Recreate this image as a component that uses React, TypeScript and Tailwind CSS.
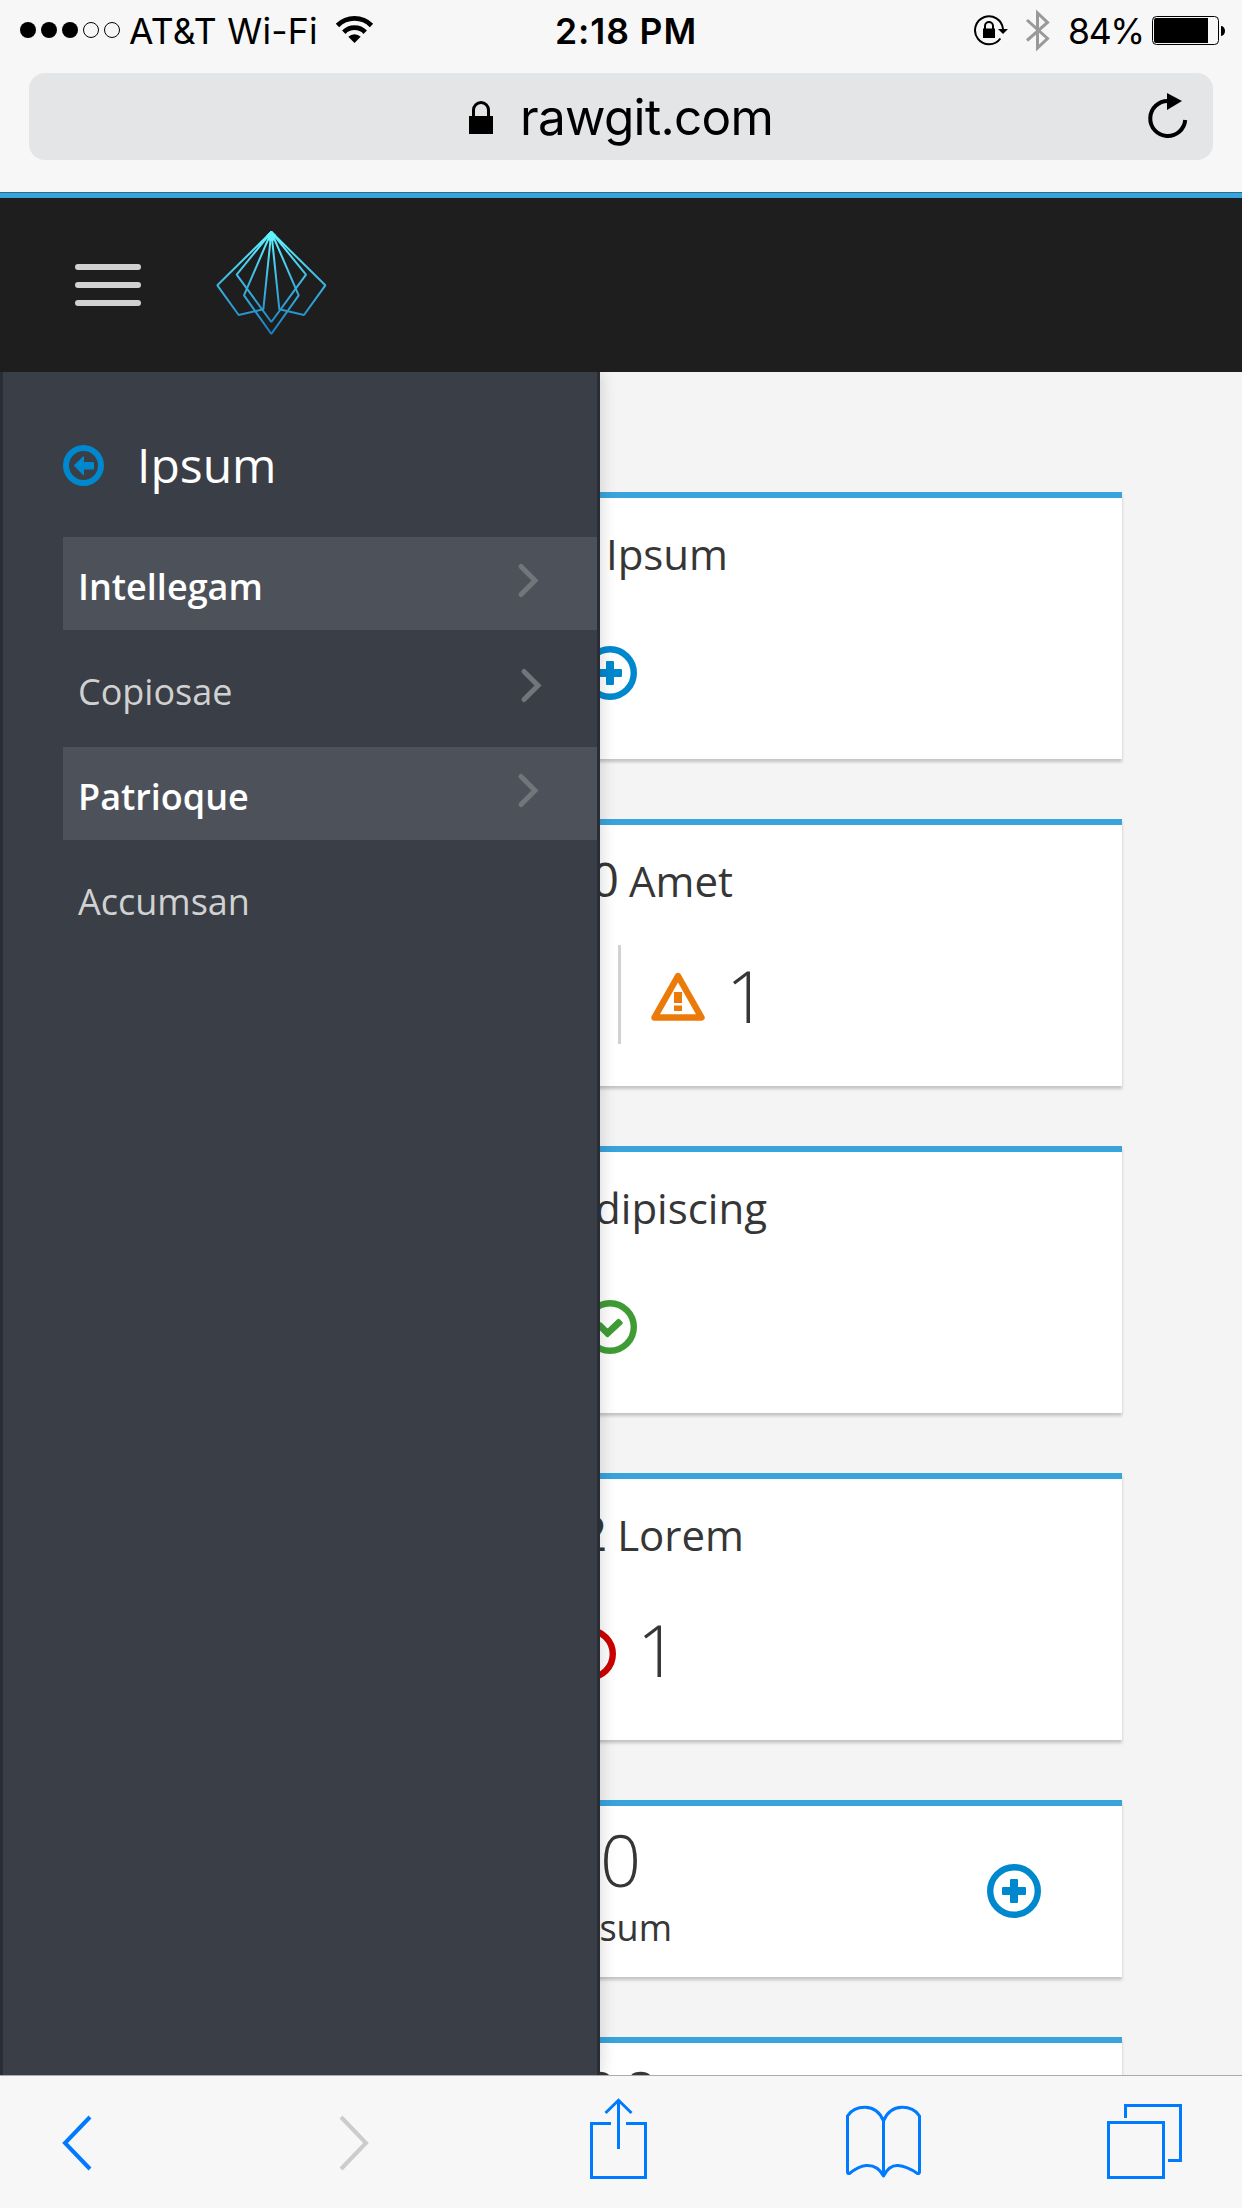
import type { ReactNode } from 'react';

function StatusBar() {
  return (
    <div className="flex h-[73px] items-start font-['Inter',sans-serif] text-black">
      <svg className="ml-5 mt-[21px] shrink-0" width="101" height="18" viewBox="20 21 101 18">
        {[28, 49, 70].map((x) => (
          <circle key={x} cx={x} cy="30" r="8" />
        ))}
        {[91, 112].map((x) => (
          <circle key={x} cx={x} cy="30" r="7.5" fill="none" stroke="#000" strokeWidth="1" />
        ))}
      </svg>
      <div className="ml-[8px] mt-[8px] w-[207px] whitespace-nowrap text-[35.5px] leading-[48px] tracking-[0.25px]">AT&amp;T Wi-Fi</div>
      <svg className="mt-[15px] shrink-0" width="38" height="29" viewBox="336 15 38 29" fill="none" stroke="#000" strokeWidth="4.8">
        <path d="M337.5 25.5a24 24 0 0 1 34 0" />
        <path d="M343.8 32.2a15 15 0 0 1 21.4 0" />
        <path d="M354.5 43l-6.2-6.2a8.6 8.6 0 0 1 12.4 0z" fill="#000" stroke="none" />
      </svg>
      <div className="ml-[181px] mt-[8px] w-[141px] whitespace-nowrap text-[35.5px] font-semibold leading-[48px] tracking-[0.9px]">2:18 PM</div>
      <svg className="ml-[278px] mt-[14px] shrink-0" width="35" height="32" viewBox="974 14 35 32">
        <path d="M1000.4 38.5A14 14 0 1 1 1003 29" fill="none" stroke="#000" strokeWidth="2" />
        <path d="M998 29h10l-5 5z" />
        <path d="M983 28.5h12V38h-12z" />
        <path d="M985 29v-3a4 4 0 0 1 8 0v3" fill="none" stroke="#000" strokeWidth="2" />
      </svg>
      <svg className="ml-[16px] mt-[9px] shrink-0" width="26" height="43" viewBox="1025 9 26 43" fill="none" stroke="#999" strokeWidth="3">
        <path d="M1027 20l20.500 18.500L1037.500 48V13l10 9.500L1027 40.500" />
      </svg>
      <div className="ml-[17px] mt-[8px] w-[83px] whitespace-nowrap text-[35.5px] leading-[48px] tracking-[-1.3px]">84%</div>
      <svg className="mt-[15px] shrink-0" width="75" height="31" viewBox="1151 15 75 31">
        <rect x="1152.500" y="16.500" width="66" height="28" rx="4" fill="none" stroke="#000" />
        <path d="M1156 18h52v25h-52a2 2 0 0 1-2-2V20a2 2 0 0 1 2-2z" />
        <path d="M1221 26a4 5 0 0 1 0 10z" />
      </svg>
    </div>
  );
}

function AddressBar() {
  return (
    <div className="mx-[29px] flex h-[87px] items-start rounded-[16px] bg-[#e4e5e6] font-['Inter',sans-serif]">
      <svg className="ml-[439px] mt-[27px] shrink-0" width="26" height="35" viewBox="468 100 26 35">
        <path d="M469 116h24v18h-24z" />
        <path d="M473.500 117v-7a7.500 7.500 0 0 1 15 0v7" fill="none" stroke="#000" strokeWidth="3" />
      </svg>
      <div className="ml-[26px] mt-[11px] w-[260px] whitespace-nowrap text-[49.5px] leading-[66px] tracking-[-0.7px] text-black">rawgit.com</div>
      <svg className="ml-[366px] mt-[19px] shrink-0" width="42" height="48" viewBox="1146 92 42 48">
        <path d="M1168 101a17.500 17.500 0 1 0 17.200 19" fill="none" stroke="#000" strokeWidth="4" />
        <path d="M1167 93l15 8-15 9z" />
      </svg>
    </div>
  );
}

const LOGO_PATHS = [
  'M814 156L652 316L716 405L790 388Z',
  'M814 156L976 316L912 405L838 388Z',
  'M814 156L710 284L814 426L918 284Z',
  'M814 156L732 346L814 462L896 346Z',
];

function Masthead() {
  return (
    <header className="h-[180px] border-t border-[#2b6d8f] bg-[#1e1e1e]">
      <div className="h-[5px] bg-[#39a3db]" />
      <div className="flex items-start">
        <div className="ml-[75px] mt-[66px] flex w-[66px] flex-col gap-3">
          <span className="h-[6px] rounded-full bg-[#d1d1d1]" />
          <span className="h-[6px] rounded-full bg-[#d1d1d1]" />
          <span className="h-[6px] rounded-full bg-[#d1d1d1]" />
        </div>
        <svg className="ml-[72px] mt-[30px]" width="115" height="110" viewBox="639 144 345 330" fill="none" stroke="url(#facets)" strokeWidth="6">
          <defs>
            <linearGradient id="facets" gradientUnits="userSpaceOnUse" x1="0" y1="156" x2="0" y2="462">
              <stop offset="0" stopColor="#5ff2ff" />
              <stop offset="0.1" stopColor="#5bebfc" />
              <stop offset="0.5" stopColor="#3bb5e0" />
              <stop offset="1" stopColor="#1a80c4" />
            </linearGradient>
          </defs>
          {LOGO_PATHS.map((d) => (
            <path key={d} d={d} strokeLinejoin="bevel" />
          ))}
          <path d="M814 152l-15 14 8 16h14l8-16z" fill="#5ff2ff" stroke="none" />
        </svg>
      </div>
    </header>
  );
}

const MENU = [
  { label: 'Intellegam', active: true, arrow: true },
  { label: 'Copiosae', active: false, arrow: true },
  { label: 'Patrioque', active: true, arrow: true },
  { label: 'Accumsan', active: false, arrow: false },
];

function Sidebar() {
  return (
    <nav className="absolute left-0 top-0 h-full w-[600px] border-x-[3px] border-[#292d35] bg-[#3a3e46] shadow-[0_0_16px_rgba(0,0,0,0.18)]">
      <div className="ml-[60px] flex h-[165px] items-start">
        <svg className="mt-[73px]" width="41" height="41" viewBox="0 0 41 41">
          <circle cx="20.500" cy="20.500" r="17.500" fill="none" stroke="#0088ce" strokeWidth="6" />
          <path d="M20 11.500q1-.8 1 .5v5h9q1 0 1 1v5.500q0 1-1 1h-9v5q0 1.300-1 .5l-9.300-9.500z" fill="#0088ce" />
        </svg>
        <h2 className="ml-[33px] mt-[60px] text-[48px] leading-[66px] text-white">Ipsum</h2>
      </div>
      <ul className="ml-[60px] flex flex-col gap-3">
        {MENU.map((m) => (
          <li
            key={m.label}
            className={
              m.active
                ? 'flex h-[93px] items-start justify-between bg-[#4d5159] pl-[15px] pr-[57px] font-semibold text-white'
                : 'flex h-[93px] items-start justify-between pl-[15px] pr-[54px] text-[#d1d1d1]'
            }
          >
            <span className="mt-[25px] text-[36px] leading-[49px]">{m.label}</span>
            {m.arrow && (
              <svg className="mt-[25px]" width="23" height="37" viewBox="0 0 23 37" fill="none" stroke="#72767b" strokeWidth="5" strokeLinecap="round" strokeLinejoin="miter">
                <path d="M4 4.500L18 18.500L4 32.500" />
              </svg>
            )}
          </li>
        ))}
      </ul>
    </nav>
  );
}

function AddIcon({ className }: { className: string }) {
  return (
    <svg className={className} width="54" height="54" viewBox="0 0 54 54">
      <circle cx="27" cy="27" r="23.800" fill="none" stroke="#0088ce" strokeWidth="6.400" />
      <path d="M24 15h6q1 0 1 1v7h7q1 0 1 1v6q0 1-1 1h-7v7q0 1-1 1h-6q-1 0-1-1v-7h-7q-1 0-1-1v-6q0-1 1-1h7v-7q0-1 1-1z" fill="#0088ce" />
    </svg>
  );
}

function Card({ title, count, children, end }: { title: string; count?: string; children: ReactNode; end: string }) {
  return (
    <section className="h-[267px] border-t-[6px] border-[#39a3db] bg-white shadow-[0_3px_3px_rgba(0,0,0,0.2)]">
      <h3 className={`flex h-[100px] items-baseline justify-end gap-[10px] leading-[66px] ${end}`}>
        {count && <span className="text-[48px]">{count}</span>}
        <span className="text-[42px]">{title}</span>
      </h3>
      <div className="flex items-start">{children}</div>
    </section>
  );
}

function Dashboard() {
  return (
    <main className="ml-[120px] flex w-[1002px] flex-col gap-[60px] pt-[120px] text-[#363636]">
      <Card title="Ipsum" end="pt-[23px] pr-[394px]">
        <AddIcon className="ml-[463px] mt-[48px]" />
      </Card>
      <Card title="Amet" count="0" end="pt-[21px] pr-[389px]">
        <div className="ml-[498px] mt-[20px] h-[99px] w-[3px] bg-[#d1d1d1]" />
        <svg className="ml-[30px] mt-[47px]" width="54" height="50" viewBox="0 0 54 50">
          <path d="M27 4L50.500 45.500H3.500Z" fill="none" stroke="#ec7a08" strokeWidth="6.400" strokeLinejoin="round" />
          <path d="M23 20h8v11h-8zM23 33.500h8v5.500h-8z" fill="#ec7a08" />
        </svg>
        <span className="ml-[21px] mt-[21px] text-[72px] font-light leading-[98px]">1</span>
      </Card>
      <Card title="Adipiscing" end="pt-[23px] pr-[355px]">
        <svg className="ml-[463px] mt-[48px]" width="54" height="54" viewBox="0 0 54 54" fill="none" stroke="#3f9c35">
          <circle cx="27" cy="27" r="23.800" strokeWidth="6.400" />
          <path d="M14.500 25.500l3-1.500 7 7L35.500 20.500l2.500 2.500L24.500 35.500L14.500 25.500z" fill="#3f9c35" strokeWidth="3.500" strokeLinejoin="round" />
        </svg>
      </Card>
      <Card title="Lorem" count="2" end="pt-[21px] pr-[378px]">
        <svg className="ml-[442px] mt-[48px]" width="54" height="54" viewBox="0 0 54 54" fill="none" stroke="#c00">
          <circle cx="27" cy="27" r="23.800" strokeWidth="6.400" />
        </svg>
        <span className="ml-[21px] mt-[21px] text-[72px] font-light leading-[98px]">1</span>
      </Card>
      <section className="flex h-[177px] items-start border-t-[6px] border-[#39a3db] bg-white shadow-[0_3px_3px_rgba(0,0,0,0.2)]">
        <div className="flex w-[552px] flex-col items-end">
          <span className="mr-[31px] mt-[4px] text-[72px] font-light leading-[98px]">0</span>
          <span className="-mt-[5px] text-[36px] leading-[49px]">Ipsum</span>
        </div>
        <AddIcon className="ml-[315px] mt-[58px]" />
      </section>
      <section className="flex h-[177px] items-start border-t-[6px] border-[#39a3db] bg-white shadow-[0_3px_3px_rgba(0,0,0,0.2)]">
        <span className="ml-[459px] mt-[4px] text-[72px] font-light leading-[98px]">00</span>
      </section>
    </main>
  );
}

function Toolbar() {
  return (
    <footer className="relative flex h-[133px] items-start border-t border-[#aaabab] bg-[#f7f7f7]">
      <svg className="ml-[60px] mt-[38px]" width="34" height="58" viewBox="60 2114 34 58" fill="none" stroke="#007aff" strokeWidth="4">
        <path d="M90 2117L65 2143L90 2169" />
      </svg>
      <svg className="ml-[243px] mt-[38px]" width="34" height="58" viewBox="337 2114 34 58" fill="none" stroke="#ccc" strokeWidth="4">
        <path d="M341 2117L366 2143L341 2169" />
      </svg>
      <svg className="ml-[217px] mt-[20px]" width="62" height="86" viewBox="588 2096 62 86" fill="none" stroke="#007aff" strokeWidth="3">
        <path d="M611 2123.500H591.500V2177.500H645.500V2123.500H626" />
        <path d="M618.500 2149V2101M605.500 2113L618.500 2100.300L631.500 2113" />
      </svg>
      <svg className="ml-[194px] mt-[28px]" width="80" height="78" viewBox="844 2104 80 78" fill="none" stroke="#007aff" strokeWidth="3" strokeLinejoin="round">
        <path d="M883.500 2121V2176C880 2169 874 2165 866 2165.500C860 2166 855 2169 849.500 2173.500Q847.500 2174 847.500 2172V2116C854 2105 876 2102 883.500 2121ZM883.500 2176C887 2169 891 2165 898 2165.500C905 2166 911 2169 917.500 2173.500Q919.500 2174 919.500 2172V2116C913 2105 891 2102 883.500 2121" />
      </svg>
      <svg className="ml-[181px] mt-[26px]" width="80" height="80" viewBox="1105 2102 80 80" fill="none" stroke="#007aff" strokeWidth="3">
        <path d="M1108.500 2122.500h55v55h-55z" />
        <path d="M1125.500 2118V2105.500H1180.500V2160.500H1168" />
      </svg>
    </footer>
  );
}

export default function App() {
  return (
    <div className="flex h-[2208px] w-[1242px] flex-col overflow-hidden bg-[#f7f7f7] font-['Open_Sans',sans-serif]">
      <div className="h-[192px] shrink-0">
        <StatusBar />
        <AddressBar />
      </div>
      <Masthead />
      <div className="relative h-[1703px] overflow-hidden bg-[#f4f4f4]">
        <Dashboard />
        <Sidebar />
      </div>
      <Toolbar />
    </div>
  );
}
